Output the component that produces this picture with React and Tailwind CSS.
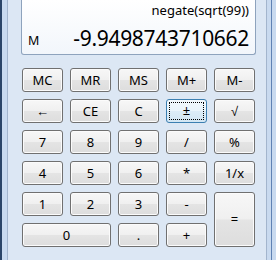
import React from "react";

const keys = [
  { label: "MC" }, { label: "MR" }, { label: "MS" }, { label: "M+" }, { label: "M-" },
  { label: "←" }, { label: "CE" }, { label: "C" }, { label: "±", focused: true }, { label: "√" },
  { label: "7" }, { label: "8" }, { label: "9" }, { label: "/" }, { label: "%" },
  { label: "4" }, { label: "5" }, { label: "6" }, { label: "*" }, { label: "1/x" },
  { label: "1" }, { label: "2" }, { label: "3" }, { label: "-" }, { label: "=", tall: true },
  { label: "0", wide: true }, { label: "." }, { label: "+" },
];

function Key({ label, focused, wide, tall }) {
  const span = [wide ? "col-span-2" : "", tall ? "row-span-2" : ""].join(" ");
  if (focused) {
    return (
      <button
        className={`${span} flex items-center justify-center rounded-[3px] border border-[#3c7fb1] bg-[linear-gradient(#f3f9fd_0%,#eaf4fb_50%,#dcecf7_52%,#d3e6f3_100%)] p-[2px] text-[13px] text-black`}
      >
        <span className="flex h-full w-full items-center justify-center border border-dotted border-black">{label}</span>
      </button>
    );
  }
  return (
    <button
      className={`${span} flex items-center justify-center rounded-[3px] border border-[#707070] bg-[linear-gradient(#f7f7f7_0%,#f0f0f0_48%,#e4e4e4_52%,#dddddd_100%)] pt-px text-[13px] text-black shadow-[inset_0_0_0_1px_#fbfbfb]`}
    >
      {label}
    </button>
  );
}

export default function App() {
  return (
    <div className="flex h-[260px] w-[276px] overflow-hidden font-['Noto_Sans',sans-serif]">
      {/* left frame */}
      <div className="w-[2px] bg-[#2b4568]" />
      <div className="w-[5px] bg-[#c9daef]" />
      <div className="w-px bg-[#a3b5cd]" />

      {/* body */}
      <div className="flex w-[258px] flex-col bg-[#dce7f4] pl-[13px] pr-[10px]">
        <div className="h-[55px] rounded-b-[3px] border border-t-0 border-[#8ea3bd] bg-[linear-gradient(#ffffff,#f2f6fb)] pr-[6px] text-black">
          <div className="pt-[2px] text-right text-[13px] leading-[16px]">negate(sqrt(99))</div>
          <div className="mt-[7px] flex items-end justify-between">
            <span className="pb-[3px] pl-[6px] text-[12.5px] leading-[15px]">M</span>
            <span className="text-[21px] leading-[26px] tracking-[-0.3px]">-9.9498743710662</span>
          </div>
        </div>

        <div className="ml-px mt-[13px] grid grid-cols-[repeat(5,41px)] auto-rows-[24px] gap-[7px]">
          {keys.map((k) => (
            <Key key={k.label} {...k} />
          ))}
        </div>
      </div>

      {/* right frame */}
      <div className="w-px bg-[#a3b5cd]" />
      <div className="w-[4px] bg-[#c9daef]" />
      <div className="w-px bg-[#5f82b4]" />
      <div className="w-[4px] bg-[#c9daef]" />
    </div>
  );
}
